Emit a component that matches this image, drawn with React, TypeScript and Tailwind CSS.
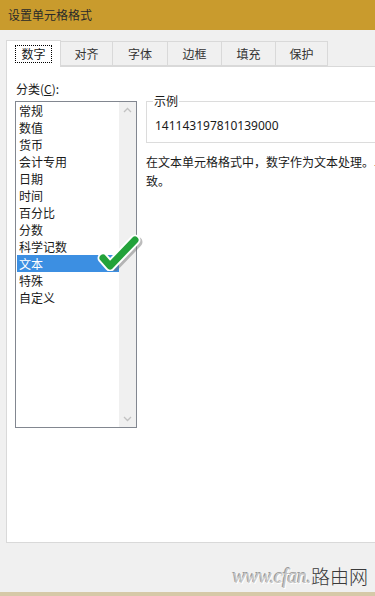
import React from "react";

const tabs = ["数字", "对齐", "字体", "边框", "填充", "保护"];
const tabWidths = ["w-[55px]", "w-[52px]", "w-[55px]", "w-[54px]", "w-[54px]", "w-[52px]"];
const categories = ["常规", "数值", "货币", "会计专用", "日期", "时间", "百分比", "分数", "科学记数", "文本", "特殊", "自定义"];

const font = { fontFamily: '"Noto Sans CJK SC", "Noto Sans", sans-serif' };

const CheckMark = () => (
  <svg width="48" height="40" viewBox="0 0 48 40" className="absolute left-[95px] top-[231px]">
    <path d="M8 27 L15 35 L40 9" fill="none" stroke="#6b6b6b" strokeOpacity="0.45" strokeWidth="11" strokeLinecap="round" strokeLinejoin="round" transform="translate(2 2)" />
    <path d="M8 27 L15 35 L40 9" fill="none" stroke="#ffffff" strokeWidth="11" strokeLinecap="round" strokeLinejoin="round" />
    <path d="M8 27 L15 35 L40 9" fill="none" stroke="#23a23a" strokeWidth="7" strokeLinecap="round" strokeLinejoin="round" />
  </svg>
);

export default function App() {
  return (
    <div className="w-[375px] h-[596px] overflow-hidden bg-[#f0f0f0] flex flex-col relative text-[12px] text-[#1a1a1a]" style={font}>
      {/* title bar */}
      <div className="h-[30px] shrink-0 bg-[#c99b2d] flex items-center px-[8px] text-[12px] text-[#2a2a2a]">
        设置单元格格式
      </div>

      {/* tabs */}
      <div className="flex items-end pl-[6px] pt-[9px] h-[36px] shrink-0">
        {tabs.map((t, i) =>
          i === 0 ? (
            <div key={t} className={`${tabWidths[i]} h-[27px] bg-white border border-b-0 border-[#d9d9d9] flex items-center justify-center relative z-10 -mb-px`}>
              <span className="border border-dotted border-black px-[5px] leading-[16px]">{t}</span>
            </div>
          ) : (
            <div key={t} className={`${tabWidths[i]} h-[25px] bg-[#f0f0f0] border border-l-0 border-[#d9d9d9] flex items-center justify-center text-[#333]`}>
              {t}
            </div>
          )
        )}
      </div>

      {/* panel */}
      <div className="ml-[6px] w-[400px] h-[477px] shrink-0 overflow-hidden bg-white border border-r-0 border-[#d9d9d9] flex pl-[8px] pt-[13px] gap-[9px]">
        <div className="flex flex-col w-[122px] shrink-0">
          <div className="h-[21px] pl-[1px] whitespace-nowrap">
            分类(<span className="underline">C</span>):
          </div>
          <div className="h-[327px] border border-[#828790] flex">
            <div className="flex-1 flex flex-col pl-[1px] whitespace-nowrap">
              {categories.map((c) => (
                <div
                  key={c}
                  className={`h-[17px] leading-[17px] pl-[2px] ${c === "文本" ? "bg-[#3c8fe2] text-white" : ""}`}
                >
                  {c}
                </div>
              ))}
            </div>
            <div className="w-[17px] shrink-0 bg-[#f0f0f0] flex flex-col justify-between items-center py-[5px]">
              <svg width="9" height="6" viewBox="0 0 9 6"><path d="M1 5 L4.5 1.5 L8 5" fill="none" stroke="#c2c2c2" strokeWidth="1.3" /></svg>
              <svg width="9" height="6" viewBox="0 0 9 6"><path d="M1 1 L4.5 4.5 L8 1" fill="none" stroke="#c2c2c2" strokeWidth="1.3" /></svg>
            </div>
          </div>
        </div>

        <div className="flex flex-col flex-1 min-w-0 pt-[14px]">
          <fieldset className="border border-[#dcdcdc] h-[49px] px-[6px]">
            <legend className="px-[1px] text-[12px] leading-[14px] text-[#1a1a1a]">示例</legend>
            <div className="pt-[9px] pl-[2px] text-[12px] text-[#1a1a1a]" style={{ fontFamily: '"Noto Sans", sans-serif' }}>
              141143197810139000
            </div>
          </fieldset>
          <div className="mt-[9px] leading-[19px]">
            <div className="whitespace-nowrap">在文本单元格格式中，数字作为文本处理。单元格显示的内容与输入的内容完全一</div>
            <div>致。</div>
          </div>
        </div>
      </div>

      {/* bottom */}
      <div className="flex-1 flex items-end justify-end pr-[7px] pb-[4px]">
        <span className="italic text-[#c4c4c4] text-[20px] leading-[24px] tracking-tight" style={{ fontFamily: '"Liberation Serif", serif', textShadow: "1px 1px 0 #ffffff, -1px -1px 0 #9a9a9a" }}>
          www.cfan.
        </span>
        <span className="text-[19px] leading-[24px] text-[#3a3a3a] font-light">路由网</span>
      </div>
      <div className="h-[4px] shrink-0 bg-[#d6c9a8]" />

      <CheckMark />
    </div>
  );
}
